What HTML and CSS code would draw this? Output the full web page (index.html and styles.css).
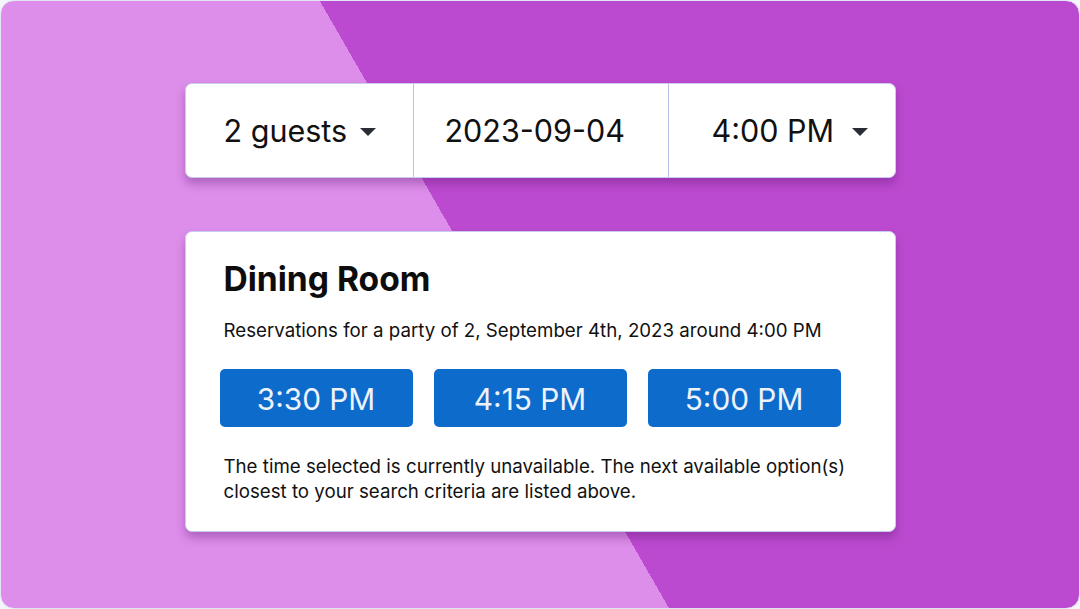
FILE: index.html
```html
<!DOCTYPE html>
<html>
<head>
<meta charset="utf-8">
<link rel="stylesheet" href="styles.css">
</head>
<body>
<div class="frame">
  <div class="stack">
    <div class="bar">
      <div class="seg seg-guests"><span>2 guests</span><span class="caret caret-guests"></span></div>
      <div class="seg seg-date"><span>2023-09-04</span></div>
      <div class="seg seg-time"><span>4:00 PM</span><span class="caret caret-time"></span></div>
    </div>
    <div class="card">
      <h1 class="title">Dining Room</h1>
      <p class="sub">Reservations for a party of 2, September 4th, 2023 around 4:00 PM</p>
      <div class="slots">
        <button class="slot">3:30 PM</button>
        <button class="slot">4:15 PM</button>
        <button class="slot">5:00 PM</button>
      </div>
      <p class="note">The time selected is currently unavailable. The next available option(s) closest to your search criteria are listed above.</p>
    </div>
  </div>
</div>
</body>
</html>
```
FILE: styles.css
```css
html, body {
  margin: 0;
  padding: 0;
  background: #f4f6fb;
}
body {
  font-family: Inter, "Noto Sans", sans-serif;
  color: #111;
}
.frame {
  box-sizing: border-box;
  width: 1080px;
  height: 609px;
  border: 1px solid #e2e6f4;
  border-radius: 14px;
  overflow: hidden;
  background: linear-gradient(60.1deg, #dd8eea 579px, #bc4ad0 579px);
  display: flex;
  justify-content: center;
  padding-top: 82px;
}
.stack {
  width: 711px;
  display: flex;
  flex-direction: column;
  gap: 53px;
}
.bar {
  box-sizing: border-box;
  height: 95px;
  background: #fff;
  border: 1.5px solid #c8cbee;
  border-radius: 7px;
  display: flex;
  box-shadow: 0 6px 10px rgba(90, 20, 110, 0.35);
}
.seg {
  display: flex;
  align-items: center;
  font-size: 30.5px;
  color: #111;
}
.seg-guests {
  width: 228px;
  padding-left: 38px;
  box-sizing: border-box;
  border-right: 1.5px solid #bcc0e6;
}
.seg-date {
  width: 255px;
  box-sizing: border-box;
  padding-left: 31px;
  border-right: 1.5px solid #bcc0e6;
}
.seg-time {
  flex: 1;
  padding-left: 43px;
}
.caret {
  width: 0;
  height: 0;
  border-left: 8px solid transparent;
  border-right: 8px solid transparent;
  border-top: 8px solid #2a2c36;
  margin-top: 2px;
}
.caret-guests {
  margin-left: 13px;
}
.caret-time {
  margin-left: 18px;
}
.card {
  box-sizing: border-box;
  height: 301px;
  background: #fff;
  border: 1.5px solid #c8cbee;
  border-radius: 7px;
  padding: 28px 0 0 38px;
  box-shadow: 0 6px 10px rgba(90, 20, 110, 0.35);
}
.title {
  margin: 0;
  font-size: 33.6px;
  font-weight: 700;
  line-height: 38px;
  color: #0d0d0d;
}
.sub {
  margin: 20px 0 0 0;
  font-size: 18.7px;
  line-height: 25px;
  color: #111;
}
.slots {
  display: flex;
  gap: 21px;
  margin: 26px 0 0 -4px;
}
.slot {
  width: 193px;
  height: 58px;
  border: none;
  border-radius: 5px;
  background: #0d6bcb;
  color: #eef2fb;
  font-family: Inter, "Noto Sans", sans-serif;
  font-size: 29.8px;
  padding: 2px 0 0 0;
}
.note {
  margin: 27px 0 0 0;
  font-size: 18.7px;
  line-height: 25px;
  color: #111;
  width: 650px;
}
```
